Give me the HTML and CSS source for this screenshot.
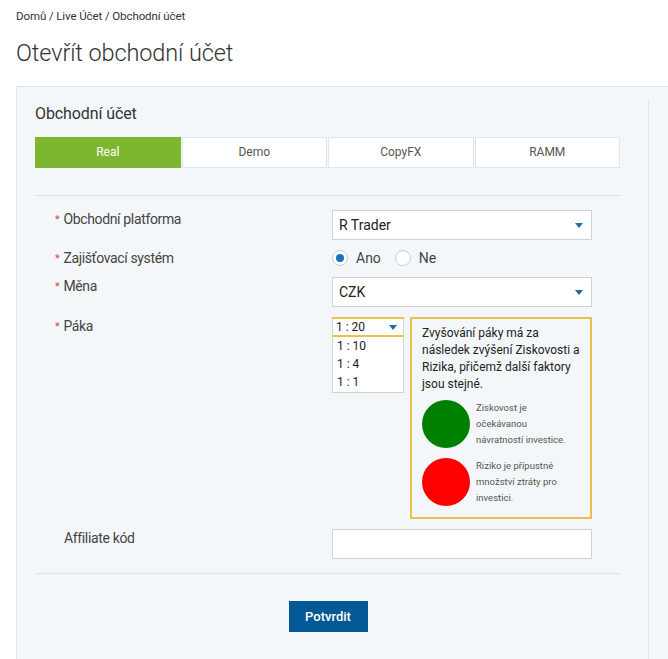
FILE: index.html
```html
<!DOCTYPE html>
<html lang="cs">
<head>
<meta charset="utf-8">
<title>Otevřít obchodní účet</title>
<link rel="stylesheet" href="styles.css">
</head>
<body>
<div class="page">
  <div class="crumbs">Domů / Live Účet / Obchodní účet</div>
  <h1 class="title">Otevřít obchodní účet</h1>
  <div class="card">
    <div class="main">
      <h2 class="card-title">Obchodní účet</h2>
      <div class="tabs">
        <div class="tab active">Real</div>
        <div class="tab">Demo</div>
        <div class="tab">CopyFX</div>
        <div class="tab">RAMM</div>
      </div>
      <div class="sep sep-top"></div>
      <div class="form">
        <div class="row row-select">
          <div class="label"><span class="req">*</span>Obchodní platforma</div>
          <div class="select"><span>R Trader</span><span class="caret"></span></div>
        </div>
        <div class="row row-radio">
          <div class="label"><span class="req">*</span>Zajišťovací systém</div>
          <div class="radios">
            <label class="radio"><span class="dot checked"></span>Ano</label>
            <label class="radio"><span class="dot"></span>Ne</label>
          </div>
        </div>
        <div class="row row-select">
          <div class="label"><span class="req">*</span>Měna</div>
          <div class="select"><span>CZK</span><span class="caret"></span></div>
        </div>
        <div class="row row-lev">
          <div class="label"><span class="req">*</span>Páka</div>
          <div class="lev-wrap">
            <div class="lev">
              <div class="lev-current"><span>1 : 20</span><span class="caret"></span></div>
              <div class="lev-opt">1 : 10</div>
              <div class="lev-opt">1 : 4</div>
              <div class="lev-opt">1 : 1</div>
            </div>
            <div class="info">
              <p class="info-text">Zvyšování páky má za následek zvýšení Ziskovosti a Rizika, přičemž další faktory jsou stejné.</p>
              <div class="info-item">
                <span class="circle green"></span>
                <span class="info-small">Ziskovost je očekávanou návratností investice.</span>
              </div>
              <div class="info-item">
                <span class="circle red"></span>
                <span class="info-small">Riziko je přípustné množství ztráty pro investici.</span>
              </div>
            </div>
          </div>
        </div>
        <div class="row row-input">
          <div class="label plain">Affiliate kód</div>
          <div class="input"></div>
        </div>
      </div>
      <div class="sep"></div>
      <div class="actions">
        <button class="btn" type="button">Potvrdit</button>
      </div>
    </div>
  </div>
</div>
</body>
</html>
```

FILE: styles.css
```css
html, body {
  margin: 0;
  padding: 0;
  overflow: hidden;
  background: #ffffff;
}
body {
  font-family: Roboto, "Open Sans", "Liberation Sans", sans-serif;
  color: #333333;
}
.page {
  box-sizing: border-box;
  height: 100vh;
  padding: 8px 0 0 16px;
  display: flex;
  flex-direction: column;
}
.crumbs {
  font-size: 11.5px;
  line-height: 16px;
  color: #333;
  letter-spacing: -0.1px;
}
.title {
  margin: 14px 0 0 0;
  font-size: 23.5px;
  line-height: 30px;
  font-weight: 300;
  color: #333;
  letter-spacing: -0.1px;
}
.card {
  flex: 1;
  margin-top: 18px;
  background: #f4f7fa;
  border-top: 1px solid #e1e6eb;
  border-left: 1px solid #e1e6eb;
  display: flex;
  align-items: stretch;
}
.main {
  margin-top: 12px;
  width: 586px;
  padding: 0 27px 0 18px;
  border-right: 1px solid #e1e6eb;
}
.card-title {
  margin: 0;
  padding-top: 5px;
  font-size: 16px;
  line-height: 20px;
  font-weight: 400;
  color: #333;
  letter-spacing: -0.1px;
}
.tabs {
  margin-top: 13px;
  display: flex;
  width: 585px;
}
.tab {
  flex: 1;
  height: 29px;
  line-height: 29px;
  text-align: center;
  font-size: 12px;
  color: #555;
  background: #fff;
  border: 1px solid #e1e6eb;
  margin-right: 1px;
}
.tab:last-child { margin-right: 0; }
.tab.active {
  background: #7db72f;
  border-color: #7db72f;
  color: #fff;
}
.sep {
  height: 1px;
  background: #dde3e8;
  width: 586px;
}
.sep-top { margin-top: 27px; }
.form {
  padding: 14px 0 14px 20px;
  display: flex;
  flex-direction: column;
  gap: 10px;
}
.row {
  display: flex;
  align-items: flex-start;
}
.label {
  width: 277px;
  font-size: 14px;
  line-height: 16px;
  padding-top: 1px;
  color: #444;
  letter-spacing: -0.35px;
}
.row-radio .label { padding-top: 0; }
.label.plain { padding-left: 9px; width: 268px; }
.req {
  color: #e0463e;
  font-size: 11px;
  margin-right: 4px;
  vertical-align: 1px;
}
.select, .input {
  box-sizing: border-box;
  width: 260px;
  height: 30px;
  background: #fff;
  border: 1px solid #cdd2d6;
}
.input { height: 30px; }
.select {
  display: flex;
  align-items: center;
  justify-content: space-between;
  padding: 0 8px 0 6px;
  font-size: 14px;
  color: #222;
}
.caret {
  width: 0;
  height: 0;
  border-left: 4px solid transparent;
  border-right: 4px solid transparent;
  border-top: 5px solid #1f6d9c;
}
.radios {
  display: flex;
  gap: 14px;
  height: 16px;
  align-items: center;
}
.radio {
  display: flex;
  align-items: center;
  gap: 8px;
  font-size: 14px;
  color: #444;
}
.dot {
  box-sizing: border-box;
  width: 16px;
  height: 16px;
  border-radius: 50%;
  border: 1px solid #c8cdd1;
  background: #fff;
  display: flex;
  align-items: center;
  justify-content: center;
}
.dot.checked::after {
  content: "";
  width: 8px;
  height: 8px;
  border-radius: 50%;
  background: #1a70bd;
}
.lev-wrap {
  display: flex;
  gap: 6px;
  align-items: flex-start;
}
.lev {
  box-sizing: border-box;
  width: 72px;
  background: #fff;
  border: 1px solid #cdd2d6;
  padding-bottom: 1px;
}
.lev-current {
  box-sizing: border-box;
  margin: -1px -1px 0 -1px;
  height: 20px;
  border-top: 2px solid #ecc14a;
  border-bottom: 2px solid #ecc14a;
  display: flex;
  align-items: center;
  justify-content: space-between;
  padding: 0 7px 0 4px;
  font-size: 12px;
  color: #222;
}
.lev-opt {
  font-size: 12px;
  line-height: 18px;
  padding-left: 4px;
  color: #222;
}
.info {
  box-sizing: border-box;
  width: 182px;
  height: 202px;
  border: 2px solid #ecc14a;
  padding: 6px 6px 0 10px;
}
.info-text {
  margin: 0;
  font-size: 12px;
  line-height: 17px;
  color: #222;
}
.info-item {
  display: flex;
  align-items: flex-start;
  gap: 6px;
  margin-top: 7px;
}
.info-item + .info-item { margin-top: 10px; }
.circle {
  flex: none;
  width: 48px;
  height: 48px;
  border-radius: 50%;
}
.circle.green { background: #008000; }
.circle.red { background: #ff0000; }
.info-small {
  width: 96px;
  font-size: 9.5px;
  line-height: 16px;
  color: #555;
  margin-top: 0;
}
.actions {
  padding-top: 27px;
  display: flex;
  justify-content: center;
}
.btn {
  width: 79px;
  height: 31px;
  border: 0;
  background: #045896;
  color: #fff;
  font-family: Roboto, "Open Sans", sans-serif;
  font-size: 13px;
  font-weight: 500;
  padding: 0;
}
```
